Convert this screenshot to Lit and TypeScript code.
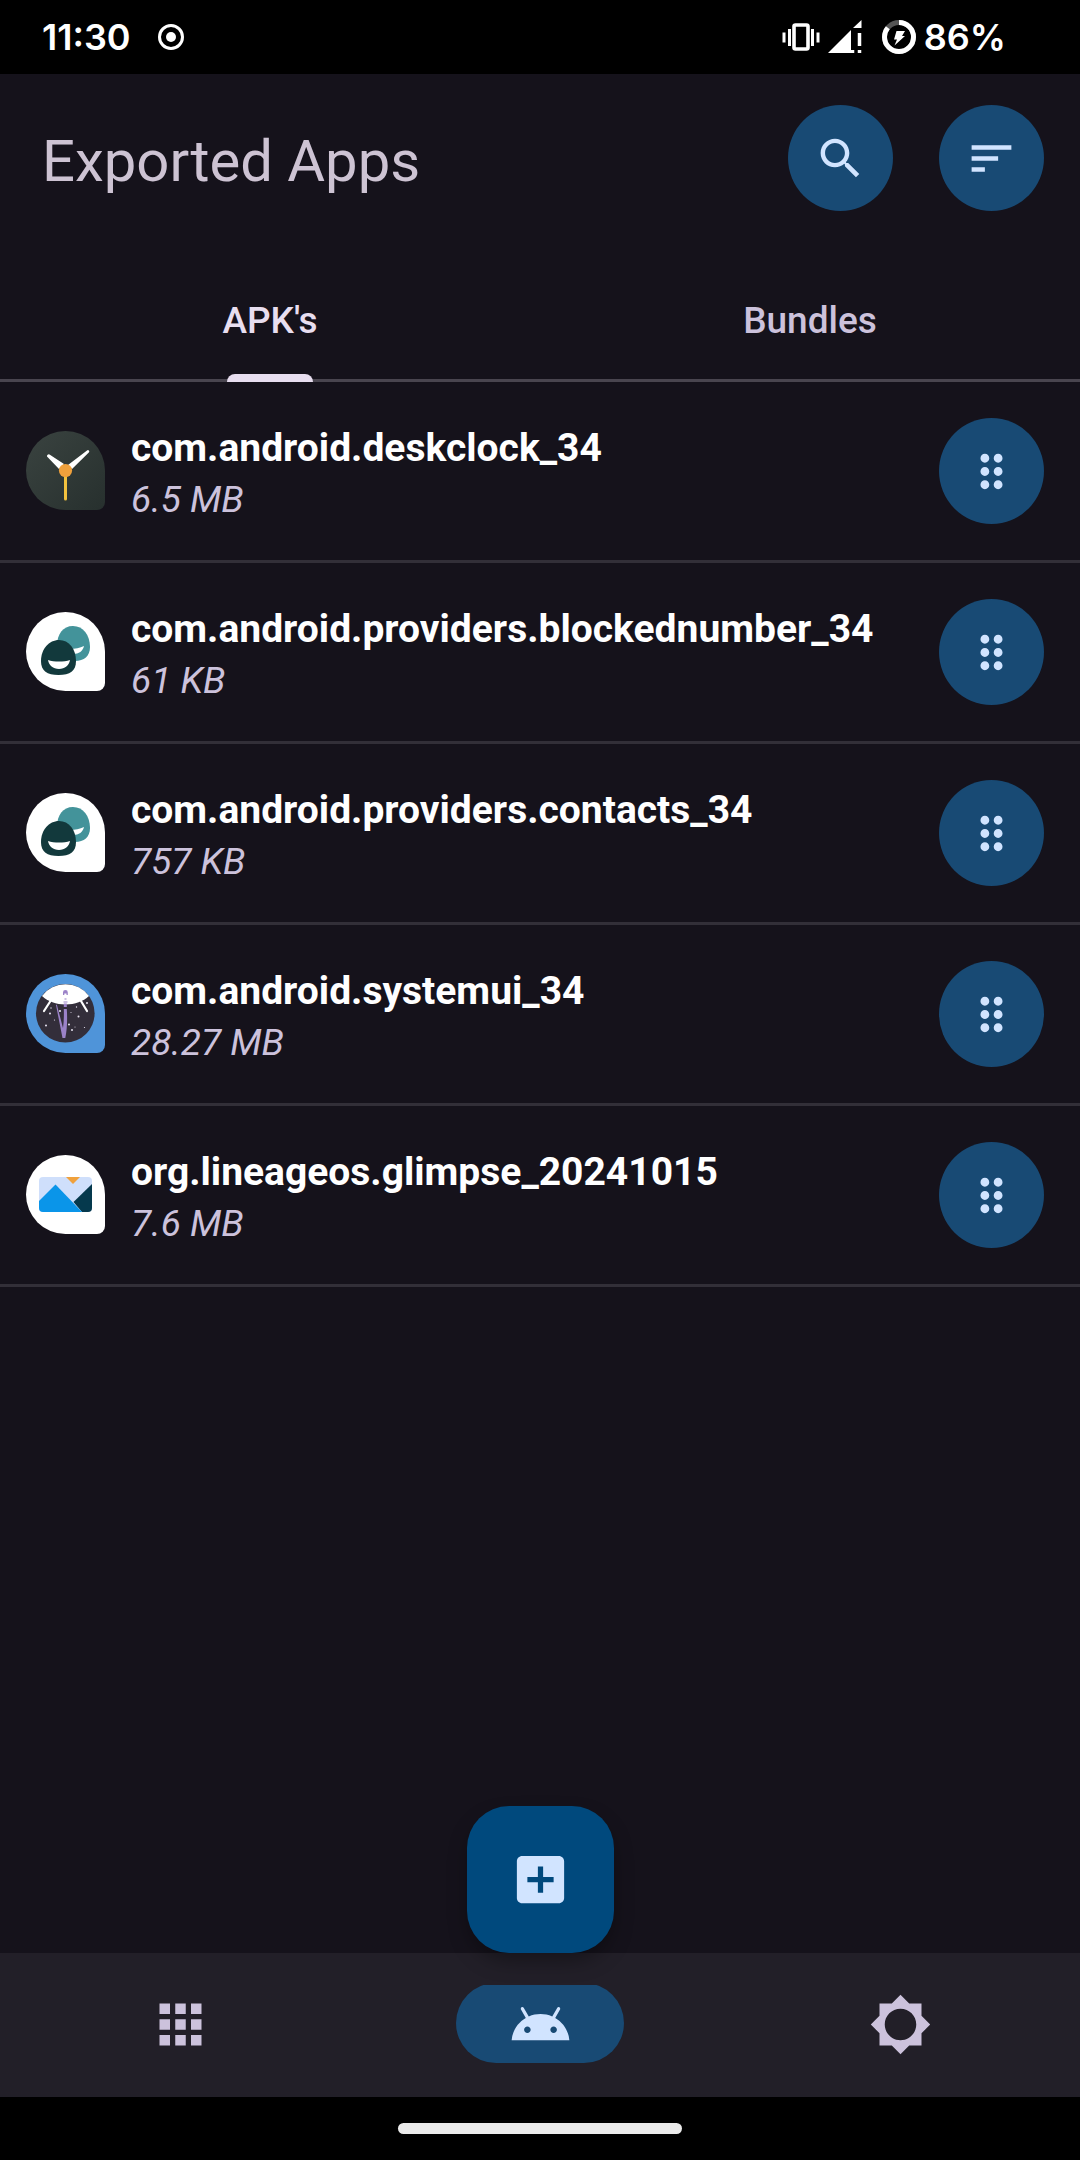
import { LitElement, html, css, svg, TemplateResult } from "lit";
import { customElement, state, property } from "lit/decorators.js";
import { classMap } from "lit/directives/class-map.js";

const ICONS: Record<string, string> = {
  search:
    "M15.5 14h-.79l-.28-.27C15.41 12.59 16 11.11 16 9.5 16 5.91 13.09 3 9.5 3S3 5.91 3 9.5 5.91 16 9.5 16c1.61 0 3.09-.59 4.23-1.57l.27.28v.79l5 4.99L20.49 19l-4.99-5zm-6 0C7.01 14 5 11.99 5 9.5S7.01 5 9.5 5 14 7.01 14 9.5 11.99 14 9.5 14z",
  sort: "M3 18h6v-2H3v2zM3 6v2h18V6H3zm0 7h12v-2H3v2z",
  drag: "M11 18c0 1.1-.9 2-2 2s-2-.9-2-2 .9-2 2-2 2 .9 2 2zm-2-8c-1.1 0-2 .9-2 2s.9 2 2 2 2-.9 2-2-.9-2-2-2zm0-6c-1.1 0-2 .9-2 2s.9 2 2 2 2-.9 2-2-.9-2-2-2zm6 4c1.1 0 2-.9 2-2s-.9-2-2-2-2 .9-2 2 .9 2 2 2zm0 2c-1.1 0-2 .9-2 2s.9 2 2 2 2-.9 2-2-.9-2-2-2zm0 6c-1.1 0-2 .9-2 2s.9 2 2 2 2-.9 2-2-.9-2-2-2z",
  addBox:
    "M19 3H5c-1.11 0-2 .9-2 2v14c0 1.1.89 2 2 2h14c1.1 0 2-.9 2-2V5c0-1.1-.9-2-2-2zm-2 10h-4v4h-2v-4H7v-2h4V7h2v4h4v2z",
  apps: "M4 8h4V4H4v4zm6 12h4v-4h-4v4zm-6 0h4v-4H4v4zm0-6h4v-4H4v4zm6 0h4v-4h-4v4zm6-10v4h4V4h-4zm-6 4h4V4h-4v4zm6 6h4v-4h-4v4zm0 6h4v-4h-4v4z",
  android:
    "M17.6 9.48l1.84-3.18c.16-.31.04-.69-.26-.85-.29-.15-.65-.06-.83.22l-1.88 3.24c-2.86-1.21-6.08-1.21-8.94 0L5.65 5.67c-.19-.29-.58-.38-.87-.2-.28.18-.37.54-.22.83L6.4 9.48C3.3 11.25 1.28 14.44 1 18h22c-.28-3.56-2.3-6.75-5.4-8.52zM7 15.25c-.69 0-1.25-.56-1.25-1.25S6.31 12.75 7 12.75 8.25 13.31 8.25 14 7.69 15.25 7 15.25zm10 0c-.69 0-1.25-.56-1.25-1.25s.56-1.25 1.25-1.25 1.25.56 1.25 1.25-.56 1.25-1.25 1.25z",
  settings:
    "M20 15.31L23.31 12 20 8.69V4h-4.69L12 .69 8.69 4H4v4.69L.69 12 4 15.31V20h4.69L12 23.31 15.31 20H20v-4.69zM12 18c-3.31 0-6-2.69-6-6s2.69-6 6-6 6 2.69 6 6-2.69 6-6 6z",
};

const icon = (name: string) =>
  html`<svg class="icon" viewBox="0 0 24 24" aria-hidden="true"><path d=${ICONS[name]}></path></svg>`;

const TEARDROP =
  "M39.5 0A39.5 39.5 0 0 1 79 39.5V71a8 8 0 0 1-8 8H39.5A39.5 39.5 0 0 1 39.5 0z";

const ARTWORK: Record<string, TemplateResult> = {
  clock: svg`
    <defs>
      <linearGradient id="clock-bg" x1="0" y1="0" x2="1" y2="1">
        <stop offset="0" stop-color="#3a4340"></stop>
        <stop offset="1" stop-color="#27302e"></stop>
      </linearGradient>
    </defs>
    <path d=${TEARDROP} fill="url(#clock-bg)"></path>
    <path d="M21 25.500a1.800 1.800 0 0 1 2.500-2L38 33l-5 5z" fill="#fff"></path>
    <path d="M61 19.500a1.300 1.300 0 0 1 1.800 2L46 38l-4-4z" fill="#fff"></path>
    <path d="M38 45h3v23a1.500 1.500 0 0 1-3 0z" fill="#f3c23e"></path>
    <circle cx="39.500" cy="39.500" r="6.600" fill="#f0a13c"></circle>`,
  contacts: svg`
    <path d=${TEARDROP} fill="#fff"></path>
    <path d="M47 14c10 0 17 9 17 21 0 9-6 14-15 14H40c-6 0-9-6-9-15 0-12 6-20 16-20z" fill="#43939a"></path>
    <path d="M44 37c5 0 10-1 14-3-1 5-5 8-11 8z" fill="#fff"></path>
    <path d="M33 28c10 0 17 9 17 21 0 10-6 14-17.500 14S15 59 15 49c0-12 8-21 18-21z" fill="#12393c"></path>
    <path d="M22 48c6 2 16 2 22 0-1 5.500-5 9-11 9s-10-3.500-11-9z" fill="#fff"></path>`,
  systemui: svg`
    <path d=${TEARDROP} fill="#4f94d9"></path>
    <circle cx="39.300" cy="39.300" r="29.300" fill="#332e3a"></circle>
    <path d="M16 22a29.300 29.300 0 0 1 47 0c-6 5.500-14 8.500-23.500 8.500S22 27.500 16 22z" fill="#fff"></path>
    <path d="M24.500 27L18 37M55 27l6 10" fill="none" stroke="#fff" stroke-width="2.200" stroke-linecap="round"></path>
    <path d="M37 21v-2.500a2.400 2.400 0 0 1 4.800 0V21h-1.300v-1.500h-2.200V21z" fill="#9b82c8"></path>
    <path d="M38.500 25h2M37.500 28h4" stroke="#9b82c8" stroke-width="1"></path>
    <path d="M37.800 29.500h3V33h-3zM37.800 35h3c.7 10 .3 21-1.500 29h-2.800L30 31l.8-.5L37 54c.9-6 1-13 .8-19z" fill="#9b82c8"></path>
    <g fill="#e9e4f2">
      <circle cx="34" cy="37" r="1"></circle><circle cx="24" cy="39.500" r="1"></circle>
      <circle cx="20" cy="51.500" r="1"></circle><circle cx="43" cy="50.500" r="1"></circle>
      <circle cx="46" cy="56" r="1"></circle><circle cx="52.500" cy="42.500" r="1"></circle>
      <circle cx="61" cy="29" r="1"></circle><circle cx="50.500" cy="33" r=".7"></circle>
      <circle cx="25" cy="34" r=".7"></circle><circle cx="49" cy="53" r=".5"></circle>
      <circle cx="58.500" cy="53.500" r=".6"></circle><circle cx="45" cy="38.500" r=".5"></circle>
      <circle cx="28.500" cy="46" r=".6"></circle>
    </g>`,
  glimpse: svg`
    <defs>
      <clipPath id="photo"><rect x="13" y="22" width="53" height="35" rx="4"></rect></clipPath>
    </defs>
    <path d=${TEARDROP} fill="#fff"></path>
    <g clip-path="url(#photo)">
      <path d="M13 22h53v35H13z" fill="#cfdffb"></path>
      <path d="M40 22h14l-7 7z" fill="#f0a13c"></path>
      <path d="M66 29L47.500 47 56 57h10z" fill="#05394d"></path>
      <path d="M13 46l16.500-16.500L56 57H13z" fill="#0a95e9"></path>
    </g>`,
};

interface ExportedApp {
  name: string;
  size: string;
  art: string;
}

const APKS: ExportedApp[] = [
  { name: "com.android.deskclock_34", size: "6.5 MB", art: "clock" },
  { name: "com.android.providers.blockednumber_34", size: "61 KB", art: "contacts" },
  { name: "com.android.providers.contacts_34", size: "757 KB", art: "contacts" },
  { name: "com.android.systemui_34", size: "28.27 MB", art: "systemui" },
  { name: "org.lineageos.glimpse_20241015", size: "7.6 MB", art: "glimpse" },
];

const shared = css`
  * {
    box-sizing: border-box;
  }
  button {
    border: 0;
    padding: 0;
    margin: 0;
    background: none;
    color: inherit;
    font: inherit;
    cursor: pointer;
  }
  .icon {
    display: block;
    width: 53px;
    height: 53px;
    fill: currentColor;
  }
  .round {
    flex: none;
    display: grid;
    place-items: center;
    width: 105px;
    height: 106px;
    border-radius: 50%;
    background: #184a74;
    color: #d1e4ff;
  }
`;

@customElement("status-bar")
export class StatusBar extends LitElement {
  static styles = css`
    :host {
      display: flex;
      align-items: center;
      height: 74px;
      padding: 0 74px 0 42px;
      background: #000;
      color: #fff;
      font: 600 36px/44px Inter, Roboto, sans-serif;
    }
    svg {
      display: block;
      flex: none;
    }
    .record {
      margin-left: 26px;
    }
    .right {
      display: flex;
      align-items: center;
      margin-left: auto;
    }
    .signal {
      margin: 0 20px 0 8px;
    }
    .battery {
      margin-right: 8px;
    }
  `;

  render() {
    return html`
      <span>11:30</span>
      <svg class="record" width="28" height="28" viewBox="0 0 28 28" aria-hidden="true">
        <circle cx="14" cy="14" r="11.500" fill="none" stroke="#fff" stroke-width="3"></circle>
        <circle cx="14" cy="14" r="5" fill="#fff"></circle>
      </svg>
      <span class="right">
        <svg width="38" height="28" viewBox="0 0 38 28" aria-hidden="true">
          <rect x="12" y="2" width="14" height="24" rx="1.500" fill="none" stroke="#fff" stroke-width="3.600"></rect>
          <path d="M7.500 6v17M30.500 6v17M2 9.500v10M36 9.500v10" stroke="#fff" stroke-width="3"></path>
        </svg>
        <svg class="signal" width="34" height="34" viewBox="0 0 34 34" aria-hidden="true">
          <path d="M0 33L23 10v23zM33.500 0v8H25z" fill="#fff"></path>
          <path d="M31.500 13v13M31.500 30v3M24.500 30v3" stroke="#fff" stroke-width="3.500"></path>
        </svg>
        <svg class="battery" width="34" height="34" viewBox="0 0 34 34" aria-hidden="true">
          <circle cx="17" cy="17" r="14.500" fill="none" stroke="#555" stroke-width="5"></circle>
          <circle cx="17" cy="17" r="14.500" fill="none" stroke="#fff" stroke-width="5"
            pathLength="100" stroke-dasharray="86 14" transform="rotate(-90 17 17)"></circle>
          <path d="M14.500 11H23l-3 5h3L12.500 25.500l2.500-6h-3z" fill="#fff"></path>
        </svg>
        <span>86%</span>
      </span>
    `;
  }
}

@customElement("app-item")
export class AppItem extends LitElement {
  @property({ attribute: false }) app!: ExportedApp;

  static styles = [
    shared,
    css`
      :host {
        display: flex;
        align-items: center;
        gap: 26px;
        height: 181px;
        padding: 0 36px 0 26px;
        border-bottom: 3px solid #322f38;
      }
      .art {
        flex: none;
        width: 79px;
        height: 80px;
      }
      .text {
        flex: 1;
        min-width: 0;
        padding-top: 6px;
      }
      .name,
      .size {
        margin: 0;
        line-height: 51px;
        white-space: nowrap;
      }
      .name {
        color: #fff;
        font-size: 39px;
        font-weight: 700;
      }
      .size {
        color: #ccc2dc;
        font-size: 37px;
        font-style: italic;
      }
    `,
  ];

  render() {
    return html`
      <svg class="art" viewBox="0 0 79 80" preserveAspectRatio="xMidYMin" aria-hidden="true">${ARTWORK[this.app.art]}</svg>
      <div class="text">
        <p class="name">${this.app.name}</p>
        <p class="size">${this.app.size}</p>
      </div>
      <button class="round" aria-label="App actions">${icon("drag")}</button>
    `;
  }
}

@customElement("app-root")
export class AppRoot extends LitElement {
  @state() private tab = 0;
  @state() private page = 1;

  static styles = [
    shared,
    css`
      :host {
        display: flex;
        flex-direction: column;
        min-height: 100vh;
        background: #15121b;
        color: #ccc2dc;
        font-family: Roboto, sans-serif;
      }
      .header {
        display: flex;
        align-items: center;
        gap: 46px;
        height: 182px;
        padding: 0 36px 14px 42px;
      }
      .title {
        flex: 1;
        margin: 0;
        padding-top: 6px;
        color: #cdc3d3;
        font-size: 58px;
        font-weight: 400;
        line-height: 74px;
      }
      .tabs {
        display: flex;
        height: 126px;
        border-bottom: 3px solid #49454f;
      }
      .tab {
        flex: 1;
        display: grid;
        grid-template-rows: 1fr 8px;
        justify-items: center;
        align-items: center;
        height: 126px;
        color: #ccc2dc;
        font-size: 37px;
        font-weight: 500;
      }
      .label {
        padding-top: 10px;
      }
      .tab.selected {
        color: #e8def0;
      }
      .indicator {
        width: 86px;
        height: 8px;
        border-radius: 8px 8px 0 0;
      }
      .selected .indicator {
        background: #e8def0;
      }
      .main {
        flex: 1;
        display: flex;
        flex-direction: column;
      }
      .list {
        margin: 0;
        padding: 0;
        list-style: none;
      }
      .fab {
        z-index: 1;
        display: grid;
        place-items: center;
        align-self: center;
        width: 147px;
        height: 147px;
        margin-top: auto;
        border-radius: 42px;
        background: #00497d;
        color: #d1e4ff;
        box-shadow: 0 10px 22px -4px rgba(0, 0, 0, 0.4);
      }
      .fab .icon,
      .nav .icon {
        width: 63px;
        height: 63px;
      }
      .nav {
        display: flex;
        align-items: center;
        height: 144px;
        padding-bottom: 2px;
        background: #221f28;
      }
      .nav-item {
        flex: 1;
        display: grid;
        place-items: center;
      }
      .pill {
        display: grid;
        place-items: center;
        width: 168px;
        height: 80px;
        margin-top: -2px;
        padding-top: 2px;
        border-radius: 40px;
        clip-path: inset(2px 0 0);
      }
      .current .pill {
        background: #184a74;
        color: #d1e4ff;
      }
      .gesture {
        display: grid;
        place-items: center;
        height: 63px;
        background: #000;
      }
      .handle {
        width: 284px;
        height: 11px;
        border-radius: 6px;
        background: #ebebeb;
      }
    `,
  ];

  private renderTab(label: string, index: number) {
    const selected = this.tab === index;
    return html`<button
      class=${classMap({ tab: true, selected })}
      role="tab"
      aria-selected=${selected ? "true" : "false"}
      @click=${() => (this.tab = index)}
    >
      <span class="label">${label}</span>
      <span class="indicator"></span>
    </button>`;
  }

  private renderNav(name: string, label: string, index: number) {
    return html`<button
      class=${classMap({ "nav-item": true, current: this.page === index })}
      aria-label=${label}
      @click=${() => (this.page = index)}
    >
      <span class="pill">${icon(name)}</span>
    </button>`;
  }

  render() {
    return html`
      <status-bar></status-bar>
      <header class="header">
        <h1 class="title">Exported Apps</h1>
        <button class="round" aria-label="Search">${icon("search")}</button>
        <button class="round" aria-label="Sort">${icon("sort")}</button>
      </header>
      <div class="tabs" role="tablist">${["APK's", "Bundles"].map((t, i) => this.renderTab(t, i))}</div>
      <main class="main">
        <ul class="list">
          ${(this.tab === 0 ? APKS : []).map((app) => html`<li><app-item .app=${app}></app-item></li>`)}
        </ul>
        <button class="fab" aria-label="Add">${icon("addBox")}</button>
      </main>
      <nav class="nav">
        ${this.renderNav("apps", "Apps", 0)} ${this.renderNav("android", "Exported", 1)}
        ${this.renderNav("settings", "Settings", 2)}
      </nav>
      <div class="gesture"><span class="handle"></span></div>
    `;
  }
}
